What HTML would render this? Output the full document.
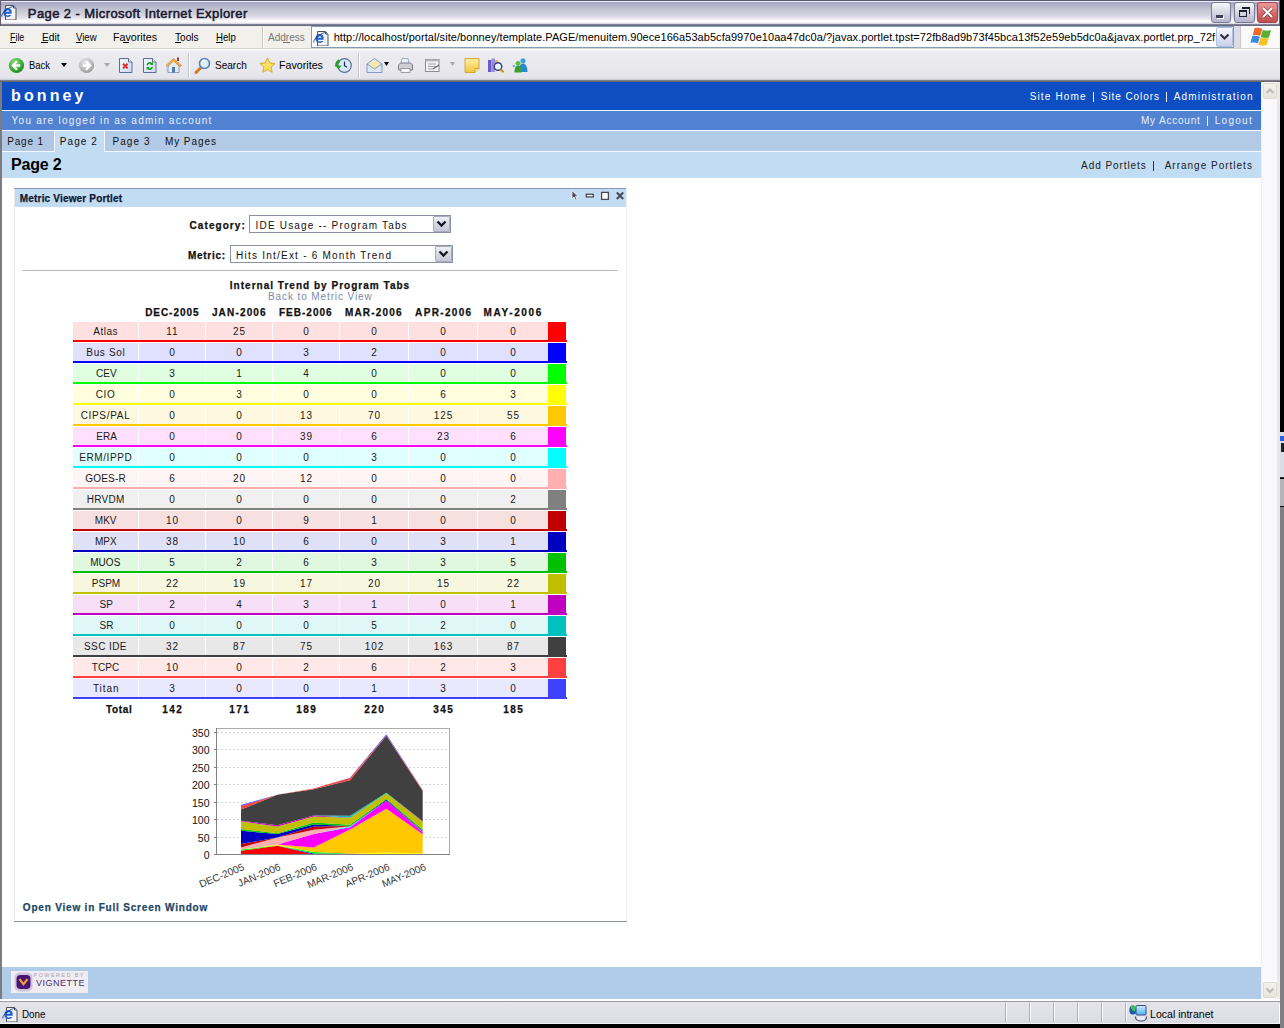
<!DOCTYPE html>
<html><head><meta charset="utf-8"><style>
html,body{margin:0;padding:0;width:1284px;height:1028px;overflow:hidden;background:#000;}
#w{position:absolute;left:0;top:0;width:1284px;height:1028px;overflow:hidden;background:#000;}
#w div{position:absolute;}
.t{white-space:pre;}
</style></head><body><div id="w">
<div style='left:0px;top:0px;width:1280px;height:26px;background:linear-gradient(#585870 0px,#585870 1px,#f0eef8 1px,#f0eef8 2px,#a6a4c0 2px,#b2b0c8 5px,#c4c6d4 10px,#d2d4e0 15px,#e6e2ee 18px,#f4f4f4 20px,#ffffff 21px,#ffffff 22px,#e4e0ea 23px,#d8d4e0 24px,#8a8aa0 24px,#606078 26px)'></div><div style='left:0px;top:0px;width:1px;height:26px;background:#606070'></div><svg style='position:absolute;left:0px;top:2px' width='18' height='18' viewBox='0 0 18 18'><path d='M5.5 3.5h8l2.5 2.5v12h-10.5z' fill='#f2f2ee' stroke='#505058' stroke-width='1'/><path d='M13.5 3.5v2.5h2.5' fill='#fff' stroke='#505058' stroke-width='1'/><path d='M11.5 8.5c-0.5-1.6-2-2.5-3.8-2.5c-2.5 0-4.4 2-4.4 4.6s1.9 4.4 4.4 4.4c1.6 0 2.9-.7 3.6-1.9h-2.3c-.4.4-.8.5-1.3.5c-1 0-1.8-.7-1.9-1.8h5.8c.1-1.3 0-2.4-.1-3.3zM5.9 9.8c.2-1 .9-1.6 1.9-1.6s1.6.6 1.7 1.6z' fill='#1f5fd0'/><path d='M2 14.5c-1-1.5 1.5-5 5.5-7.5s7-3 7.5-2' fill='none' stroke='#1a3a90' stroke-width='1' opacity='.85'/></svg><div style='left:1211px;top:2px;width:20px;height:21px;border:1px solid #7a7a92;border-radius:3px;box-sizing:border-box;background:linear-gradient(#f8f8fc,#d4d4e2 55%,#b4b4cc)'></div><div style='left:1216px;top:15px;width:7px;height:3px;background:#404058;box-shadow:1px 1px 0 #fff'></div><div style='left:1234px;top:2px;width:21px;height:21px;border:1px solid #7a7a92;border-radius:3px;box-sizing:border-box;background:linear-gradient(#f8f8fc,#d4d4e2 55%,#b4b4cc)'></div><div style='left:1239px;top:10px;width:8px;height:7px;border:1px solid #202030;border-top-width:2px;box-sizing:border-box'></div><div style='left:1242px;top:7px;width:8px;height:7px;border:1px solid #202030;border-top-width:2px;border-left:none;border-bottom:none;box-sizing:border-box'></div><div style='left:1257px;top:2px;width:21px;height:21px;border:1px solid #a04050;border-radius:3px;box-sizing:border-box;background:linear-gradient(#ec9a9a,#d46868 55%,#c05050)'></div><svg style='position:absolute;left:1257px;top:2px' width='21' height='21'><path d='M6 6L15 15M15 6L6 15' stroke='#602030' stroke-width='3.4' opacity='.55'/><path d='M6 6L15 15M15 6L6 15' stroke='#ffffff' stroke-width='2'/></svg><div style='left:1277px;top:82px;width:3px;height:918px;background:#ebe9e8'></div><div style='left:1279px;top:0px;width:1px;height:26px;background:#606070'></div><div style='left:1280px;top:432px;width:4px;height:45px;background:#dcdce6'></div><div style='left:1280px;top:436px;width:4px;height:5px;background:#3060e0'></div><div style='left:1281px;top:443px;width:3px;height:9px;background:#202020'></div><div style='left:1280px;top:477px;width:4px;height:1px;background:#303030'></div><div style='left:1280px;top:479px;width:4px;height:27px;background:#b4b4b8'></div><div style='left:1280px;top:506px;width:4px;height:1px;background:#101010'></div><div style='left:1280px;top:507px;width:4px;height:521px;background:#808084'></div><div style='left:0px;top:26px;width:1280px;height:23px;background:#f1f0ea'></div><div style='left:0px;top:48px;width:1280px;height:1px;background:#d8d4cc'></div><div style='left:10px;top:42px;width:6px;height:1px;background:#000'></div><div style='left:41px;top:42px;width:7px;height:1px;background:#000'></div><div style='left:76px;top:42px;width:6px;height:1px;background:#000'></div><div style='left:123px;top:42px;width:6px;height:1px;background:#000'></div><div style='left:175px;top:42px;width:6px;height:1px;background:#000'></div><div style='left:216px;top:42px;width:7px;height:1px;background:#000'></div><div style='left:262px;top:27px;width:1px;height:21px;background:#c8c4bc'></div><div style='left:263px;top:27px;width:1px;height:21px;background:#ffffff'></div><div style='left:283px;top:42px;width:7px;height:1px;background:#767676'></div><div style='left:311px;top:26px;width:923px;height:22px;background:#fff;border:1px solid #7f9db9;box-sizing:border-box'></div><svg style='position:absolute;left:312px;top:28px' width='18' height='18' viewBox='0 0 18 18'><path d='M5.5 3.5h8l2.5 2.5v12h-10.5z' fill='#f2f2ee' stroke='#505058' stroke-width='1'/><path d='M13.5 3.5v2.5h2.5' fill='#fff' stroke='#505058' stroke-width='1'/><path d='M11.5 8.5c-0.5-1.6-2-2.5-3.8-2.5c-2.5 0-4.4 2-4.4 4.6s1.9 4.4 4.4 4.4c1.6 0 2.9-.7 3.6-1.9h-2.3c-.4.4-.8.5-1.3.5c-1 0-1.8-.7-1.9-1.8h5.8c.1-1.3 0-2.4-.1-3.3zM5.9 9.8c.2-1 .9-1.6 1.9-1.6s1.6.6 1.7 1.6z' fill='#1f5fd0'/><path d='M2 14.5c-1-1.5 1.5-5 5.5-7.5s7-3 7.5-2' fill='none' stroke='#1a3a90' stroke-width='1' opacity='.85'/></svg><div style='left:1216px;top:27px;width:17px;height:20px;border:1px solid #b0c0e0;border-radius:2px;box-sizing:border-box;background:linear-gradient(#f8f8ff,#c8d0e8)'></div><svg style='position:absolute;left:1216px;top:27px' width='17' height='20'><path d='M4.5 7.5L8.5 11.5L12.5 7.5' fill='none' stroke='#303040' stroke-width='2.2'/></svg><div style='left:1234px;top:26px;width:6px;height:22px;background:#dcdce6'></div><div style='left:1240px;top:26px;width:1px;height:22px;background:#c8c8d0'></div><div style='left:1241px;top:26px;width:38px;height:22px;background:#fafafa'></div><svg style='position:absolute;left:1244px;top:24px' width='36' height='24' viewBox='0 0 36 24'><path d='M10.5 4.2c2.5-.6 5-.4 7.8.6l-2 7c-2.6-1-5-1.1-7.6-.5z' fill='#f26a2a'/><path d='M18.8 6c2.8 1 5.6 1 8.2.3l-2 7.2c-2.6.7-5.4.6-8.2-.4z' fill='#5cb030'/><path d='M8.2 12.2c2.6-.6 5-.5 7.6.5l-1.8 6.6c-2.6-1-5-1.1-7.6-.5z' fill='#3a8ae0'/><path d='M16.5 13.5c2.8 1 5.4 1.1 8.2.4l-2 7.2c-2.6.7-5.4.6-8.2-.4z' fill='#f8c020'/></svg><div style='left:0px;top:49px;width:1280px;height:31px;background:linear-gradient(#fbfbfc 0px,#fbfbfc 1px,#ececf0 2px,#e8e8ed 20px,#e4e4ea 29px,#c8c8d0 31px)'></div><div style='left:0px;top:80px;width:1280px;height:2px;background:linear-gradient(#8a8a94,#5c5c66)'></div><svg style='position:absolute;left:8px;top:57px' width='17' height='17' viewBox='0 0 17 17'><defs><radialGradient id='gb' cx='.4' cy='.3' r='.8'><stop offset='0' stop-color='#8ee07a'/><stop offset='.6' stop-color='#3aaa32'/><stop offset='1' stop-color='#1e7a1e'/></radialGradient><radialGradient id='gf' cx='.4' cy='.3' r='.8'><stop offset='0' stop-color='#e8e8e8'/><stop offset='.6' stop-color='#b8b8b8'/><stop offset='1' stop-color='#909090'/></radialGradient></defs><circle cx='8.5' cy='8.5' r='7.6' fill='url(#gb)'/><path d='M9 4.2L4.8 8.5L9 12.8M5.2 8.5h7' fill='none' stroke='#fff' stroke-width='2.3'/></svg><svg style='position:absolute;left:60px;top:62px' width='8' height='6'><path d='M1 1h6L4 5z' fill='#000'/></svg><svg style='position:absolute;left:78px;top:57px' width='17' height='17' viewBox='0 0 17 17'><circle cx='8.5' cy='8.5' r='7.6' fill='url(#gf)'/><path d='M8 4.2L12.2 8.5L8 12.8M11.8 8.5h-7' fill='none' stroke='#fff' stroke-width='2.3'/></svg><svg style='position:absolute;left:103px;top:62px' width='8' height='6'><path d='M1 1h6L4 5z' fill='#a8a8a8'/></svg><svg style='position:absolute;left:118px;top:57px' width='16' height='17' viewBox='0 0 16 17'><defs><linearGradient id='gd' x1='0' y1='0' x2='1' y2='1'><stop offset='0' stop-color='#f4f8ff'/><stop offset='1' stop-color='#c8d8f4'/></linearGradient></defs><path d='M1.5 1.5h9l3.5 3.5v10.5h-12.5z' fill='url(#gd)' stroke='#5a6e98'/><path d='M10.5 1.5v3.5h3.5' fill='#fff' stroke='#5a6e98'/><path d='M5 6.8l4.6 4.6M9.6 6.8l-4.6 4.6' stroke='#e03020' stroke-width='2'/></svg><svg style='position:absolute;left:142px;top:57px' width='16' height='17' viewBox='0 0 16 17'><path d='M1.5 1.5h9l3.5 3.5v10.5h-12.5z' fill='url(#gd)' stroke='#5a6e98'/><path d='M10.5 1.5v3.5h3.5' fill='#fff' stroke='#5a6e98'/><path d='M4.6 8.2a3.2 3.2 0 0 1 5.4-2.2l1-1v3h-3l1-1a2 2 0 0 0-3 1.2zM11 9.8a3.2 3.2 0 0 1-5.4 2.2l-1 1v-3h3l-1 1a2 2 0 0 0 3-1.2z' fill='#18a018'/></svg><svg style='position:absolute;left:165px;top:56px' width='18' height='18' viewBox='0 0 18 18'><path d='M3 9.5v7h11v-7l-5.5-5z' fill='#e4ecf8' stroke='#7a8aa8' stroke-width='.8'/><path d='M1 9.5L8.5 2.5L16.5 9.5L15 10.8L8.5 5L2.5 10.8z' fill='#f8b040' stroke='#c87820' stroke-width='.6'/><rect x='12' y='1.5' width='2' height='3.5' fill='#a04020'/><rect x='7' y='11' width='3' height='5.5' fill='#5a78a8'/><path d='M3 9.5v7l-1.5-1.5v-5z' fill='#a8c0e0'/></svg><div style='left:188px;top:53px;width:1px;height:25px;background:#c4c4cc'></div><div style='left:189px;top:53px;width:1px;height:25px;background:#fff'></div><svg style='position:absolute;left:194px;top:57px' width='17' height='17' viewBox='0 0 17 17'><path d='M2 15.5L6.5 11' stroke='#c88030' stroke-width='3' stroke-linecap='round'/><circle cx='10.5' cy='6.5' r='5' fill='#dcefff' stroke='#5a80b8' stroke-width='1.6'/><path d='M8 5a3 3 0 0 1 3-2' stroke='#fff' stroke-width='1.2' fill='none'/></svg><svg style='position:absolute;left:259px;top:57px' width='17' height='17' viewBox='0 0 17 17'><path d='M8.5 1l2.3 4.9 5.2.6-3.9 3.6 1.1 5.2-4.7-2.7-4.7 2.7 1.1-5.2L1 6.5l5.2-.6z' fill='#fce060' stroke='#d0a020' stroke-width='.9'/></svg><svg style='position:absolute;left:335px;top:57px' width='17' height='17' viewBox='0 0 17 17'><circle cx='9.5' cy='8.5' r='6.8' fill='#d8e8f8' stroke='#5a6e98' stroke-width='1.2'/><path d='M9.5 4.5v4.2l2.6 1.6' stroke='#203050' stroke-width='1.2' fill='none'/><path d='M1.5 9.5a6 6 0 0 1 3-6' stroke='#28a028' stroke-width='2.6' fill='none'/><path d='M0.5 8.5l3 4 3-4z' fill='#28a028'/></svg><div style='left:358px;top:53px;width:1px;height:25px;background:#c4c4cc'></div><div style='left:359px;top:53px;width:1px;height:25px;background:#fff'></div><svg style='position:absolute;left:366px;top:57px' width='17' height='17' viewBox='0 0 17 17'><path d='M1 7l7.5-5.5 7.5 5.5v8.5H1z' fill='#dce8f8' stroke='#7890c0' stroke-width='.9'/><path d='M3 6.5l5.5-3.5 5.5 3.5v3l-5.5 3-5.5-3z' fill='#f8e8b0'/><path d='M1 7l7.5 5 7.5-5' fill='none' stroke='#7890c0' stroke-width='.9'/></svg><svg style='position:absolute;left:384px;top:62px' width='6' height='5'><path d='M0 0h5L2.5 4z' fill='#000'/></svg><svg style='position:absolute;left:397px;top:57px' width='17' height='17' viewBox='0 0 17 17'><path d='M5 1.5h6l1 5h-8z' fill='#e8f0ff' stroke='#8898b8' stroke-width='.8'/><path d='M1.5 8l2-2h10l2 2v5h-14z' fill='#d0d0d4' stroke='#70707a' stroke-width='.9'/><rect x='4' y='11.5' width='9' height='4' fill='#f8f8f8' stroke='#8a8a90' stroke-width='.8'/></svg><svg style='position:absolute;left:424px;top:57px' width='17' height='17' viewBox='0 0 17 17'><rect x='1.5' y='2.5' width='13.5' height='12' fill='#f4f4f4' stroke='#8c8c8c'/><rect x='1.5' y='2.5' width='13.5' height='2' fill='#b8b8b8'/><path d='M4 7h8M4 9.5h8M4 12h5' stroke='#a0a0a0'/><path d='M9 12l6-4' stroke='#707070' stroke-width='1.5'/></svg><svg style='position:absolute;left:450px;top:62px' width='6' height='5'><path d='M0 0h5L2.5 4z' fill='#a8a8a8'/></svg><svg style='position:absolute;left:464px;top:57px' width='16' height='17' viewBox='0 0 16 17'><defs><linearGradient id='gs' x1='0' y1='0' x2='0' y2='1'><stop offset='0' stop-color='#fff0a0'/><stop offset='1' stop-color='#f0c840'/></linearGradient></defs><path d='M1 1.5h14v10l-4 4H1z' fill='url(#gs)' stroke='#d0a030' stroke-width='.9'/><path d='M15 11.5h-4v4' fill='#f8e8a0' stroke='#d0a030' stroke-width='.9'/></svg><svg style='position:absolute;left:487px;top:57px' width='17' height='17' viewBox='0 0 17 17'><rect x='1' y='3' width='3.5' height='12' fill='#6a5ac8'/><rect x='4.5' y='1.5' width='3.5' height='13.5' fill='#9890d8'/><rect x='8' y='3' width='3' height='5' fill='#e0c040'/><circle cx='11' cy='9.5' r='3.8' fill='#e4f2ff' stroke='#3a3a80' stroke-width='1.4'/><path d='M13.5 12.2l3 3' stroke='#c89020' stroke-width='2'/></svg><svg style='position:absolute;left:512px;top:57px' width='17' height='17' viewBox='0 0 17 17'><circle cx='11' cy='3.8' r='2.6' fill='#38a0e8'/><path d='M6.5 15c0-5.5 2-8.5 4.5-8.5s4.5 3 4.5 8.5z' fill='#2a88d0'/><circle cx='6' cy='6.3' r='2.4' fill='#58c040'/><path d='M2.5 15.5c0-5 1.2-7 3.5-7s3.5 2 3.5 7z' fill='#38a030'/><circle cx='1.8' cy='9' r='1.1' fill='#38a0e8'/></svg><div style='left:0px;top:82px;width:2px;height:917px;background:#7c7c80'></div><div style='left:2px;top:82px;width:1259px;height:916px;background:#ffffff'></div><div style='left:2px;top:82px;width:1259px;height:28px;background:#0e4ec2'></div><div style='left:2px;top:110px;width:1259px;height:1px;background:#f4f8ff'></div><div style='left:2px;top:111px;width:1259px;height:19px;background:#5282d2'></div><div style='left:2px;top:130px;width:1259px;height:1px;background:#f4f8ff'></div><div style='left:2px;top:131px;width:1259px;height:20px;background:#b2cae6'></div><div style='left:2px;top:151px;width:1259px;height:1px;background:#f4f8ff'></div><div style='left:2px;top:152px;width:1259px;height:26px;background:#c2dcf4'></div><div style='left:2px;top:131px;width:53px;height:21px;background:#b0c8e4;border-right:1px solid #f4f8ff;border-bottom:1px solid #f4f8ff;box-sizing:border-box'></div><div style='left:54px;top:131px;width:51px;height:21px;background:#c2dcf4;border-left:1px solid #f4f8ff;border-right:1px solid #f4f8ff;box-sizing:border-box'></div><div style='left:1093px;top:92px;width:1px;height:10px;background:#f0f4ff'></div><div style='left:1166px;top:92px;width:1px;height:10px;background:#f0f4ff'></div><div style='left:1207px;top:116px;width:1px;height:10px;background:#e8eefa'></div><div style='left:1153px;top:161px;width:1px;height:10px;background:#303040'></div><div style='left:1261px;top:82px;width:16px;height:917px;background:#f9f9fc;border-left:1px solid #eeeef4;box-sizing:border-box'></div><div style='left:1263px;top:83px;width:14px;height:16px;background:linear-gradient(#f4f2ec,#e6e4dc);border:1px solid #dcdad2;border-radius:2px;box-sizing:border-box'></div><svg style='position:absolute;left:1263px;top:83px' width='14' height='16'><path d='M3.5 10L7 6.5L10.5 10' fill='none' stroke='#bcbab4' stroke-width='2'/></svg><div style='left:1263px;top:982px;width:14px;height:16px;background:linear-gradient(#f4f2ec,#e6e4dc);border:1px solid #dcdad2;border-radius:2px;box-sizing:border-box'></div><svg style='position:absolute;left:1263px;top:982px' width='14' height='16'><path d='M3.5 6.5L7 10L10.5 6.5' fill='none' stroke='#bcbab4' stroke-width='2'/></svg><div style='left:14px;top:188px;width:612px;height:1px;background:#8898b0'></div><div style='left:14px;top:189px;width:612px;height:18px;background:#c2dcf4'></div><div style='left:14px;top:189px;width:1px;height:732px;background:#ececf0'></div><div style='left:626px;top:188px;width:1px;height:733px;background:#f0f0f4'></div><div style='left:14px;top:921px;width:613px;height:1px;background:#8e96a4'></div><svg style='position:absolute;left:566px;top:186px' width='64' height='18' viewBox='0 0 64 18'><path d='M6 4.7v8.2l2-1.9 1.7 3.2 1.3-.7-1.6-3.1h2.8z' fill='#4a4a56' stroke='#fff' stroke-width='.7'/><rect x='20.3' y='8.3' width='7' height='2.6' fill='#fff' stroke='#4a4a56' stroke-width='1.3'/><rect x='35.6' y='6.4' width='6.8' height='7' fill='#fff' stroke='#4a4a56' stroke-width='1.3'/><path d='M50.8 6.5L57.2 12.9M57.2 6.5L50.8 12.9' stroke='#4a4a56' stroke-width='2.1'/></svg><div style='left:249px;top:215px;width:202px;height:18px;border:1px solid #8a94a4;background:#fff;box-sizing:border-box'></div><div style='left:433px;top:216px;width:17px;height:16px;border:1px solid #a8acbc;border-radius:1px;background:linear-gradient(#f0f0f6,#d8d8e4 50%,#c6c6d6);box-sizing:border-box'></div><svg style='position:absolute;left:433px;top:216px' width='17' height='16'><path d='M4.5 5.5L8.5 9.5L12.5 5.5' fill='none' stroke='#181820' stroke-width='2.3'/></svg><div style='left:230px;top:245px;width:223px;height:18px;border:1px solid #8a94a4;background:#fff;box-sizing:border-box'></div><div style='left:435px;top:246px;width:17px;height:16px;border:1px solid #a8acbc;border-radius:1px;background:linear-gradient(#f0f0f6,#d8d8e4 50%,#c6c6d6);box-sizing:border-box'></div><svg style='position:absolute;left:435px;top:246px' width='17' height='16'><path d='M4.5 5.5L8.5 9.5L12.5 5.5' fill='none' stroke='#181820' stroke-width='2.3'/></svg><div style='left:22px;top:270px;width:596px;height:1px;background:#b8b8c0'></div><div style='left:73px;top:322px;width:475px;height:18px;background:#ffe0e0'></div><div style='left:73px;top:340px;width:476px;height:2px;background:#ff0000'></div><div style='left:138px;top:322px;width:1px;height:18px;background:#ffffff'></div><div style='left:205px;top:322px;width:1px;height:18px;background:#ffffff'></div><div style='left:272px;top:322px;width:1px;height:18px;background:#ffffff'></div><div style='left:339px;top:322px;width:1px;height:18px;background:#ffffff'></div><div style='left:408px;top:322px;width:1px;height:18px;background:#ffffff'></div><div style='left:477px;top:322px;width:1px;height:18px;background:#ffffff'></div><div style='left:548px;top:322px;width:18px;height:20px;background:#ff0000'></div><div style='left:566px;top:340px;width:1px;height:2px;background:#ff0000'></div><div style='left:73px;top:343px;width:475px;height:18px;background:#e0e0ff'></div><div style='left:73px;top:361px;width:476px;height:2px;background:#0000ff'></div><div style='left:138px;top:343px;width:1px;height:18px;background:#ffffff'></div><div style='left:205px;top:343px;width:1px;height:18px;background:#ffffff'></div><div style='left:272px;top:343px;width:1px;height:18px;background:#ffffff'></div><div style='left:339px;top:343px;width:1px;height:18px;background:#ffffff'></div><div style='left:408px;top:343px;width:1px;height:18px;background:#ffffff'></div><div style='left:477px;top:343px;width:1px;height:18px;background:#ffffff'></div><div style='left:548px;top:343px;width:18px;height:20px;background:#0000ff'></div><div style='left:566px;top:361px;width:1px;height:2px;background:#0000ff'></div><div style='left:73px;top:364px;width:475px;height:18px;background:#e0ffe0'></div><div style='left:73px;top:382px;width:476px;height:2px;background:#00ff00'></div><div style='left:138px;top:364px;width:1px;height:18px;background:#ffffff'></div><div style='left:205px;top:364px;width:1px;height:18px;background:#ffffff'></div><div style='left:272px;top:364px;width:1px;height:18px;background:#ffffff'></div><div style='left:339px;top:364px;width:1px;height:18px;background:#ffffff'></div><div style='left:408px;top:364px;width:1px;height:18px;background:#ffffff'></div><div style='left:477px;top:364px;width:1px;height:18px;background:#ffffff'></div><div style='left:548px;top:364px;width:18px;height:20px;background:#00ff00'></div><div style='left:566px;top:382px;width:1px;height:2px;background:#00ff00'></div><div style='left:73px;top:385px;width:475px;height:18px;background:#ffffe0'></div><div style='left:73px;top:403px;width:476px;height:2px;background:#ffff00'></div><div style='left:138px;top:385px;width:1px;height:18px;background:#ffffff'></div><div style='left:205px;top:385px;width:1px;height:18px;background:#ffffff'></div><div style='left:272px;top:385px;width:1px;height:18px;background:#ffffff'></div><div style='left:339px;top:385px;width:1px;height:18px;background:#ffffff'></div><div style='left:408px;top:385px;width:1px;height:18px;background:#ffffff'></div><div style='left:477px;top:385px;width:1px;height:18px;background:#ffffff'></div><div style='left:548px;top:385px;width:18px;height:20px;background:#ffff00'></div><div style='left:566px;top:403px;width:1px;height:2px;background:#ffff00'></div><div style='left:73px;top:406px;width:475px;height:18px;background:#fff8e0'></div><div style='left:73px;top:424px;width:476px;height:2px;background:#ffc800'></div><div style='left:138px;top:406px;width:1px;height:18px;background:#ffffff'></div><div style='left:205px;top:406px;width:1px;height:18px;background:#ffffff'></div><div style='left:272px;top:406px;width:1px;height:18px;background:#ffffff'></div><div style='left:339px;top:406px;width:1px;height:18px;background:#ffffff'></div><div style='left:408px;top:406px;width:1px;height:18px;background:#ffffff'></div><div style='left:477px;top:406px;width:1px;height:18px;background:#ffffff'></div><div style='left:548px;top:406px;width:18px;height:20px;background:#ffc800'></div><div style='left:566px;top:424px;width:1px;height:2px;background:#ffc800'></div><div style='left:73px;top:427px;width:475px;height:18px;background:#ffe0ff'></div><div style='left:73px;top:445px;width:476px;height:2px;background:#ff00ff'></div><div style='left:138px;top:427px;width:1px;height:18px;background:#ffffff'></div><div style='left:205px;top:427px;width:1px;height:18px;background:#ffffff'></div><div style='left:272px;top:427px;width:1px;height:18px;background:#ffffff'></div><div style='left:339px;top:427px;width:1px;height:18px;background:#ffffff'></div><div style='left:408px;top:427px;width:1px;height:18px;background:#ffffff'></div><div style='left:477px;top:427px;width:1px;height:18px;background:#ffffff'></div><div style='left:548px;top:427px;width:18px;height:20px;background:#ff00ff'></div><div style='left:566px;top:445px;width:1px;height:2px;background:#ff00ff'></div><div style='left:73px;top:448px;width:475px;height:18px;background:#e0ffff'></div><div style='left:73px;top:466px;width:476px;height:2px;background:#00ffff'></div><div style='left:138px;top:448px;width:1px;height:18px;background:#ffffff'></div><div style='left:205px;top:448px;width:1px;height:18px;background:#ffffff'></div><div style='left:272px;top:448px;width:1px;height:18px;background:#ffffff'></div><div style='left:339px;top:448px;width:1px;height:18px;background:#ffffff'></div><div style='left:408px;top:448px;width:1px;height:18px;background:#ffffff'></div><div style='left:477px;top:448px;width:1px;height:18px;background:#ffffff'></div><div style='left:548px;top:448px;width:18px;height:20px;background:#00ffff'></div><div style='left:566px;top:466px;width:1px;height:2px;background:#00ffff'></div><div style='left:73px;top:469px;width:475px;height:18px;background:#fff5f5'></div><div style='left:73px;top:487px;width:476px;height:2px;background:#ffafaf'></div><div style='left:138px;top:469px;width:1px;height:18px;background:#ffffff'></div><div style='left:205px;top:469px;width:1px;height:18px;background:#ffffff'></div><div style='left:272px;top:469px;width:1px;height:18px;background:#ffffff'></div><div style='left:339px;top:469px;width:1px;height:18px;background:#ffffff'></div><div style='left:408px;top:469px;width:1px;height:18px;background:#ffffff'></div><div style='left:477px;top:469px;width:1px;height:18px;background:#ffffff'></div><div style='left:548px;top:469px;width:18px;height:20px;background:#ffafaf'></div><div style='left:566px;top:487px;width:1px;height:2px;background:#ffafaf'></div><div style='left:73px;top:490px;width:475px;height:18px;background:#f0f0f0'></div><div style='left:73px;top:508px;width:476px;height:2px;background:#808080'></div><div style='left:138px;top:490px;width:1px;height:18px;background:#ffffff'></div><div style='left:205px;top:490px;width:1px;height:18px;background:#ffffff'></div><div style='left:272px;top:490px;width:1px;height:18px;background:#ffffff'></div><div style='left:339px;top:490px;width:1px;height:18px;background:#ffffff'></div><div style='left:408px;top:490px;width:1px;height:18px;background:#ffffff'></div><div style='left:477px;top:490px;width:1px;height:18px;background:#ffffff'></div><div style='left:548px;top:490px;width:18px;height:20px;background:#808080'></div><div style='left:566px;top:508px;width:1px;height:2px;background:#808080'></div><div style='left:73px;top:511px;width:475px;height:18px;background:#f7e0e0'></div><div style='left:73px;top:529px;width:476px;height:2px;background:#c00000'></div><div style='left:138px;top:511px;width:1px;height:18px;background:#ffffff'></div><div style='left:205px;top:511px;width:1px;height:18px;background:#ffffff'></div><div style='left:272px;top:511px;width:1px;height:18px;background:#ffffff'></div><div style='left:339px;top:511px;width:1px;height:18px;background:#ffffff'></div><div style='left:408px;top:511px;width:1px;height:18px;background:#ffffff'></div><div style='left:477px;top:511px;width:1px;height:18px;background:#ffffff'></div><div style='left:548px;top:511px;width:18px;height:20px;background:#c00000'></div><div style='left:566px;top:529px;width:1px;height:2px;background:#c00000'></div><div style='left:73px;top:532px;width:475px;height:18px;background:#e0e0f7'></div><div style='left:73px;top:550px;width:476px;height:2px;background:#0000c0'></div><div style='left:138px;top:532px;width:1px;height:18px;background:#ffffff'></div><div style='left:205px;top:532px;width:1px;height:18px;background:#ffffff'></div><div style='left:272px;top:532px;width:1px;height:18px;background:#ffffff'></div><div style='left:339px;top:532px;width:1px;height:18px;background:#ffffff'></div><div style='left:408px;top:532px;width:1px;height:18px;background:#ffffff'></div><div style='left:477px;top:532px;width:1px;height:18px;background:#ffffff'></div><div style='left:548px;top:532px;width:18px;height:20px;background:#0000c0'></div><div style='left:566px;top:550px;width:1px;height:2px;background:#0000c0'></div><div style='left:73px;top:553px;width:475px;height:18px;background:#e0f7e0'></div><div style='left:73px;top:571px;width:476px;height:2px;background:#00c000'></div><div style='left:138px;top:553px;width:1px;height:18px;background:#ffffff'></div><div style='left:205px;top:553px;width:1px;height:18px;background:#ffffff'></div><div style='left:272px;top:553px;width:1px;height:18px;background:#ffffff'></div><div style='left:339px;top:553px;width:1px;height:18px;background:#ffffff'></div><div style='left:408px;top:553px;width:1px;height:18px;background:#ffffff'></div><div style='left:477px;top:553px;width:1px;height:18px;background:#ffffff'></div><div style='left:548px;top:553px;width:18px;height:20px;background:#00c000'></div><div style='left:566px;top:571px;width:1px;height:2px;background:#00c000'></div><div style='left:73px;top:574px;width:475px;height:18px;background:#f7f7e0'></div><div style='left:73px;top:592px;width:476px;height:2px;background:#c0c000'></div><div style='left:138px;top:574px;width:1px;height:18px;background:#ffffff'></div><div style='left:205px;top:574px;width:1px;height:18px;background:#ffffff'></div><div style='left:272px;top:574px;width:1px;height:18px;background:#ffffff'></div><div style='left:339px;top:574px;width:1px;height:18px;background:#ffffff'></div><div style='left:408px;top:574px;width:1px;height:18px;background:#ffffff'></div><div style='left:477px;top:574px;width:1px;height:18px;background:#ffffff'></div><div style='left:548px;top:574px;width:18px;height:20px;background:#c0c000'></div><div style='left:566px;top:592px;width:1px;height:2px;background:#c0c000'></div><div style='left:73px;top:595px;width:475px;height:18px;background:#f7e0f7'></div><div style='left:73px;top:613px;width:476px;height:2px;background:#c000c0'></div><div style='left:138px;top:595px;width:1px;height:18px;background:#ffffff'></div><div style='left:205px;top:595px;width:1px;height:18px;background:#ffffff'></div><div style='left:272px;top:595px;width:1px;height:18px;background:#ffffff'></div><div style='left:339px;top:595px;width:1px;height:18px;background:#ffffff'></div><div style='left:408px;top:595px;width:1px;height:18px;background:#ffffff'></div><div style='left:477px;top:595px;width:1px;height:18px;background:#ffffff'></div><div style='left:548px;top:595px;width:18px;height:20px;background:#c000c0'></div><div style='left:566px;top:613px;width:1px;height:2px;background:#c000c0'></div><div style='left:73px;top:616px;width:475px;height:18px;background:#e0f7f7'></div><div style='left:73px;top:634px;width:476px;height:2px;background:#00c0c0'></div><div style='left:138px;top:616px;width:1px;height:18px;background:#ffffff'></div><div style='left:205px;top:616px;width:1px;height:18px;background:#ffffff'></div><div style='left:272px;top:616px;width:1px;height:18px;background:#ffffff'></div><div style='left:339px;top:616px;width:1px;height:18px;background:#ffffff'></div><div style='left:408px;top:616px;width:1px;height:18px;background:#ffffff'></div><div style='left:477px;top:616px;width:1px;height:18px;background:#ffffff'></div><div style='left:548px;top:616px;width:18px;height:20px;background:#00c0c0'></div><div style='left:566px;top:634px;width:1px;height:2px;background:#00c0c0'></div><div style='left:73px;top:637px;width:475px;height:18px;background:#e8e8e8'></div><div style='left:73px;top:655px;width:476px;height:2px;background:#404040'></div><div style='left:138px;top:637px;width:1px;height:18px;background:#ffffff'></div><div style='left:205px;top:637px;width:1px;height:18px;background:#ffffff'></div><div style='left:272px;top:637px;width:1px;height:18px;background:#ffffff'></div><div style='left:339px;top:637px;width:1px;height:18px;background:#ffffff'></div><div style='left:408px;top:637px;width:1px;height:18px;background:#ffffff'></div><div style='left:477px;top:637px;width:1px;height:18px;background:#ffffff'></div><div style='left:548px;top:637px;width:18px;height:20px;background:#404040'></div><div style='left:566px;top:655px;width:1px;height:2px;background:#404040'></div><div style='left:73px;top:658px;width:475px;height:18px;background:#ffe8e8'></div><div style='left:73px;top:676px;width:476px;height:2px;background:#ff4040'></div><div style='left:138px;top:658px;width:1px;height:18px;background:#ffffff'></div><div style='left:205px;top:658px;width:1px;height:18px;background:#ffffff'></div><div style='left:272px;top:658px;width:1px;height:18px;background:#ffffff'></div><div style='left:339px;top:658px;width:1px;height:18px;background:#ffffff'></div><div style='left:408px;top:658px;width:1px;height:18px;background:#ffffff'></div><div style='left:477px;top:658px;width:1px;height:18px;background:#ffffff'></div><div style='left:548px;top:658px;width:18px;height:20px;background:#ff4040'></div><div style='left:566px;top:676px;width:1px;height:2px;background:#ff4040'></div><div style='left:73px;top:679px;width:475px;height:18px;background:#e8e8ff'></div><div style='left:73px;top:697px;width:476px;height:2px;background:#4040ff'></div><div style='left:138px;top:679px;width:1px;height:18px;background:#ffffff'></div><div style='left:205px;top:679px;width:1px;height:18px;background:#ffffff'></div><div style='left:272px;top:679px;width:1px;height:18px;background:#ffffff'></div><div style='left:339px;top:679px;width:1px;height:18px;background:#ffffff'></div><div style='left:408px;top:679px;width:1px;height:18px;background:#ffffff'></div><div style='left:477px;top:679px;width:1px;height:18px;background:#ffffff'></div><div style='left:548px;top:679px;width:18px;height:20px;background:#4040ff'></div><div style='left:566px;top:697px;width:1px;height:2px;background:#4040ff'></div><div style='left:2px;top:967px;width:1259px;height:32px;background:#b0cce8'></div><div style='left:11px;top:971px;width:77px;height:22px;background:#efedf2'></div><svg style='position:absolute;left:14px;top:972px' width='19' height='20' viewBox='0 0 19 20'><rect x='0.5' y='0.5' width='18' height='19' rx='5' fill='#b8a0c8' opacity='.55'/><rect x='2.5' y='3' width='14' height='14' rx='4' fill='#4a1474'/><path d='M4.5 7.5L9.5 14L14.5 7.5L12.5 6.5L9.5 10.5L6.5 6.5z' fill='#f0a030'/></svg><div style='left:0px;top:999px;width:1280px;height:2px;background:#ffffff'></div><div style='left:0px;top:1001px;width:1280px;height:1px;background:#9c9ca4'></div><div style='left:0px;top:1002px;width:1280px;height:21px;background:linear-gradient(#e4e4ea,#dcdce4)'></div><div style='left:0px;top:1023px;width:1280px;height:1px;background:#f4f4f8'></div><div style='left:1279px;top:1004px;width:1px;height:19px;background:#ffffff'></div><div style='left:1005px;top:1003px;width:1px;height:19px;background:#b0b0b8'></div><div style='left:1006px;top:1003px;width:1px;height:19px;background:#ffffff'></div><div style='left:1029px;top:1003px;width:1px;height:19px;background:#b0b0b8'></div><div style='left:1030px;top:1003px;width:1px;height:19px;background:#ffffff'></div><div style='left:1053px;top:1003px;width:1px;height:19px;background:#b0b0b8'></div><div style='left:1054px;top:1003px;width:1px;height:19px;background:#ffffff'></div><div style='left:1077px;top:1003px;width:1px;height:19px;background:#b0b0b8'></div><div style='left:1078px;top:1003px;width:1px;height:19px;background:#ffffff'></div><div style='left:1101px;top:1003px;width:1px;height:19px;background:#b0b0b8'></div><div style='left:1102px;top:1003px;width:1px;height:19px;background:#ffffff'></div><div style='left:1125px;top:1003px;width:1px;height:19px;background:#b0b0b8'></div><div style='left:1126px;top:1003px;width:1px;height:19px;background:#ffffff'></div><svg style='position:absolute;left:1px;top:1004px' width='18' height='18' viewBox='0 0 18 18'><path d='M5.5 3.5h8l2.5 2.5v12h-10.5z' fill='#f2f2ee' stroke='#505058' stroke-width='1'/><path d='M13.5 3.5v2.5h2.5' fill='#fff' stroke='#505058' stroke-width='1'/><path d='M11.5 8.5c-0.5-1.6-2-2.5-3.8-2.5c-2.5 0-4.4 2-4.4 4.6s1.9 4.4 4.4 4.4c1.6 0 2.9-.7 3.6-1.9h-2.3c-.4.4-.8.5-1.3.5c-1 0-1.8-.7-1.9-1.8h5.8c.1-1.3 0-2.4-.1-3.3zM5.9 9.8c.2-1 .9-1.6 1.9-1.6s1.6.6 1.7 1.6z' fill='#1f5fd0'/><path d='M2 14.5c-1-1.5 1.5-5 5.5-7.5s7-3 7.5-2' fill='none' stroke='#1a3a90' stroke-width='1' opacity='.85'/></svg><svg style='position:absolute;left:1126px;top:1002px' width='24' height='22' viewBox='0 0 24 22'><defs><linearGradient id='gm' x1='0' y1='0' x2='0' y2='1'><stop offset='0' stop-color='#c8f0ff'/><stop offset='1' stop-color='#50b0f0'/></linearGradient></defs><path d='M9.5 14.5c0 3 1 4.5 5.5 4.5s5.5-1.5 5.5-4.5' fill='#ecebf4' stroke='#4a4868' stroke-width='1.2'/><rect x='10' y='3.5' width='10' height='9.5' rx='1' fill='url(#gm)' stroke='#3a4a88' stroke-width='1'/><ellipse cx='6.8' cy='8' rx='3.4' ry='4.6' fill='#1858b0'/><path d='M4.5 4.5c1.5-1.5 4-1.5 5.5 0.5l-1 4.5c-2 0-4-2-4.5-5z' fill='#40c050'/></svg><svg style='position:absolute;left:0;top:0' width='1284' height='1028' viewBox='0 0 1284 1028'><line x1='217' y1='837.5' x2='449' y2='837.5' stroke='#d4d4d4' stroke-width='1' stroke-dasharray='2,2'/><line x1='217' y1='819.5' x2='449' y2='819.5' stroke='#d4d4d4' stroke-width='1' stroke-dasharray='2,2'/><line x1='217' y1='802.5' x2='449' y2='802.5' stroke='#d4d4d4' stroke-width='1' stroke-dasharray='2,2'/><line x1='217' y1='784.5' x2='449' y2='784.5' stroke='#d4d4d4' stroke-width='1' stroke-dasharray='2,2'/><line x1='217' y1='767.5' x2='449' y2='767.5' stroke='#d4d4d4' stroke-width='1' stroke-dasharray='2,2'/><line x1='217' y1='749.5' x2='449' y2='749.5' stroke='#d4d4d4' stroke-width='1' stroke-dasharray='2,2'/><line x1='217' y1='732.5' x2='449' y2='732.5' stroke='#d4d4d4' stroke-width='1' stroke-dasharray='2,2'/><polygon points='241.00,850.66 277.34,845.78 313.68,854.50 350.02,854.50 386.36,854.50 422.70,854.50 422.70,854.50 386.36,854.50 350.02,854.50 313.68,854.50 277.34,854.50 241.00,854.50' fill='#ff0000'/><polygon points='241.00,850.66 277.34,845.78 313.68,853.45 350.02,853.80 386.36,854.50 422.70,854.50 422.70,854.50 386.36,854.50 350.02,854.50 313.68,854.50 277.34,845.78 241.00,850.66' fill='#0000ff'/><polygon points='241.00,849.62 277.34,845.43 313.68,852.06 350.02,853.80 386.36,854.50 422.70,854.50 422.70,854.50 386.36,854.50 350.02,853.80 313.68,853.45 277.34,845.78 241.00,850.66' fill='#00ff00'/><polygon points='241.00,849.62 277.34,844.38 313.68,852.06 350.02,853.80 386.36,852.41 422.70,853.45 422.70,854.50 386.36,854.50 350.02,853.80 313.68,852.06 277.34,845.43 241.00,849.62' fill='#ffff00'/><polygon points='241.00,849.62 277.34,844.38 313.68,847.52 350.02,829.38 386.36,808.79 422.70,834.26 422.70,853.45 386.36,852.41 350.02,853.80 313.68,852.06 277.34,844.38 241.00,849.62' fill='#ffc800'/><polygon points='241.00,849.62 277.34,844.38 313.68,833.91 350.02,827.29 386.36,800.77 422.70,832.17 422.70,834.26 386.36,808.79 350.02,829.38 313.68,847.52 277.34,844.38 241.00,849.62' fill='#ff00ff'/><polygon points='241.00,849.62 277.34,844.38 313.68,833.91 350.02,826.24 386.36,800.77 422.70,832.17 422.70,832.17 386.36,800.77 350.02,827.29 313.68,833.91 277.34,844.38 241.00,849.62' fill='#00ffff'/><polygon points='241.00,847.52 277.34,837.40 313.68,829.73 350.02,826.24 386.36,800.77 422.70,832.17 422.70,832.17 386.36,800.77 350.02,826.24 313.68,833.91 277.34,844.38 241.00,849.62' fill='#ffafaf'/><polygon points='241.00,847.52 277.34,837.40 313.68,829.73 350.02,826.24 386.36,800.77 422.70,831.47 422.70,832.17 386.36,800.77 350.02,826.24 313.68,829.73 277.34,837.40 241.00,847.52' fill='#808080'/><polygon points='241.00,844.03 277.34,837.40 313.68,826.59 350.02,825.89 386.36,800.77 422.70,831.47 422.70,831.47 386.36,800.77 350.02,826.24 313.68,829.73 277.34,837.40 241.00,847.52' fill='#c00000'/><polygon points='241.00,830.77 277.34,833.91 313.68,824.49 350.02,825.89 386.36,799.72 422.70,831.12 422.70,831.47 386.36,800.77 350.02,825.89 313.68,826.59 277.34,837.40 241.00,844.03' fill='#0000c0'/><polygon points='241.00,829.03 277.34,833.22 313.68,822.40 350.02,824.84 386.36,798.68 422.70,829.38 422.70,831.12 386.36,799.72 350.02,825.89 313.68,824.49 277.34,833.91 241.00,830.77' fill='#00c000'/><polygon points='241.00,821.35 277.34,826.59 313.68,816.47 350.02,817.87 386.36,793.44 422.70,821.70 422.70,829.38 386.36,798.68 350.02,824.84 313.68,822.40 277.34,833.22 241.00,829.03' fill='#c0c000'/><polygon points='241.00,820.66 277.34,825.19 313.68,815.42 350.02,817.52 386.36,793.44 422.70,821.35 422.70,821.70 386.36,793.44 350.02,817.87 313.68,816.47 277.34,826.59 241.00,821.35' fill='#c000c0'/><polygon points='241.00,820.66 277.34,825.19 313.68,815.42 350.02,815.77 386.36,792.74 422.70,821.35 422.70,821.35 386.36,793.44 350.02,817.52 313.68,815.42 277.34,825.19 241.00,820.66' fill='#00c0c0'/><polygon points='241.00,809.49 277.34,794.84 313.68,789.26 350.02,780.18 386.36,735.87 422.70,791.00 422.70,821.35 386.36,792.74 350.02,815.77 313.68,815.42 277.34,825.19 241.00,820.66' fill='#404040'/><polygon points='241.00,806.00 277.34,794.84 313.68,788.56 350.02,778.09 386.36,735.18 422.70,789.95 422.70,791.00 386.36,735.87 350.02,780.18 313.68,789.26 277.34,794.84 241.00,809.49' fill='#ff4040'/><polygon points='241.00,804.96 277.34,794.84 313.68,788.56 350.02,777.74 386.36,734.13 422.70,789.95 422.70,789.95 386.36,735.18 350.02,778.09 313.68,788.56 277.34,794.84 241.00,806.00' fill='#4040ff'/><rect x='216.5' y='728.5' width='233' height='126' fill='none' stroke='#ababab' stroke-width='1'/><line x1='216.5' y1='728' x2='216.5' y2='855' stroke='#808080' stroke-width='1'/><line x1='216' y1='854.5' x2='450' y2='854.5' stroke='#808080' stroke-width='1'/><line x1='214' y1='854.5' x2='216' y2='854.5' stroke='#808080' stroke-width='1'/><text x='209.5' y='858.7' text-anchor='end' font-family='Liberation Sans' font-size='10.5' fill='#101010'>0</text><line x1='214' y1='837.5' x2='216' y2='837.5' stroke='#808080' stroke-width='1'/><text x='209.5' y='841.7' text-anchor='end' font-family='Liberation Sans' font-size='10.5' fill='#101010'>50</text><line x1='214' y1='819.5' x2='216' y2='819.5' stroke='#808080' stroke-width='1'/><text x='209.5' y='823.7' text-anchor='end' font-family='Liberation Sans' font-size='10.5' fill='#101010'>100</text><line x1='214' y1='802.5' x2='216' y2='802.5' stroke='#808080' stroke-width='1'/><text x='209.5' y='806.7' text-anchor='end' font-family='Liberation Sans' font-size='10.5' fill='#101010'>150</text><line x1='214' y1='784.5' x2='216' y2='784.5' stroke='#808080' stroke-width='1'/><text x='209.5' y='788.7' text-anchor='end' font-family='Liberation Sans' font-size='10.5' fill='#101010'>200</text><line x1='214' y1='767.5' x2='216' y2='767.5' stroke='#808080' stroke-width='1'/><text x='209.5' y='771.7' text-anchor='end' font-family='Liberation Sans' font-size='10.5' fill='#101010'>250</text><line x1='214' y1='749.5' x2='216' y2='749.5' stroke='#808080' stroke-width='1'/><text x='209.5' y='753.7' text-anchor='end' font-family='Liberation Sans' font-size='10.5' fill='#101010'>300</text><line x1='214' y1='732.5' x2='216' y2='732.5' stroke='#808080' stroke-width='1'/><text x='209.5' y='736.7' text-anchor='end' font-family='Liberation Sans' font-size='10.5' fill='#101010'>350</text><text x='245.0' y='869.6' text-anchor='end' font-family='Liberation Sans' font-size='10.2' fill='#383838' transform='rotate(-22.5 245.0 869.6)'>DEC-2005</text><text x='281.3' y='869.6' text-anchor='end' font-family='Liberation Sans' font-size='10.2' fill='#383838' transform='rotate(-22.5 281.3 869.6)'>JAN-2006</text><text x='317.7' y='869.6' text-anchor='end' font-family='Liberation Sans' font-size='10.2' fill='#383838' transform='rotate(-22.5 317.7 869.6)'>FEB-2006</text><text x='354.0' y='869.6' text-anchor='end' font-family='Liberation Sans' font-size='10.2' fill='#383838' transform='rotate(-22.5 354.0 869.6)'>MAR-2006</text><text x='390.4' y='869.6' text-anchor='end' font-family='Liberation Sans' font-size='10.2' fill='#383838' transform='rotate(-22.5 390.4 869.6)'>APR-2006</text><text x='426.7' y='869.6' text-anchor='end' font-family='Liberation Sans' font-size='10.2' fill='#383838' transform='rotate(-22.5 426.7 869.6)'>MAY-2006</text></svg>
<div class=t style='left:27.80px;top:7.00px;font-family:"Liberation Sans", sans-serif;font-size:13px;line-height:13px;font-weight:normal;color:#181830;letter-spacing:0.409px;-webkit-text-stroke:0.55px #181830;text-shadow:1px 1px 0 rgba(255,255,255,.35);'>Page 2 - Microsoft Internet Explorer</div><div class=t style='left:10.30px;top:32.00px;font-family:"Liberation Sans", sans-serif;font-size:11px;line-height:11px;font-weight:normal;color:#000;letter-spacing:0.000px;transform:scaleX(0.8065);transform-origin:0.00px 0;'>File</div><div class=t style='left:41.80px;top:32.00px;font-family:"Liberation Sans", sans-serif;font-size:11px;line-height:11px;font-weight:normal;color:#000;letter-spacing:0.000px;transform:scaleX(0.9313);transform-origin:0.00px 0;'>Edit</div><div class=t style='left:76.10px;top:32.00px;font-family:"Liberation Sans", sans-serif;font-size:11px;line-height:11px;font-weight:normal;color:#000;letter-spacing:0.000px;transform:scaleX(0.8734);transform-origin:0.00px 0;'>View</div><div class=t style='left:113.40px;top:32.00px;font-family:"Liberation Sans", sans-serif;font-size:11px;line-height:11px;font-weight:normal;color:#000;letter-spacing:0.000px;transform:scaleX(0.9730);transform-origin:0.00px 0;'>Favorites</div><div class=t style='left:174.90px;top:32.00px;font-family:"Liberation Sans", sans-serif;font-size:11px;line-height:11px;font-weight:normal;color:#000;letter-spacing:0.000px;transform:scaleX(0.9206);transform-origin:0.00px 0;'>Tools</div><div class=t style='left:216.00px;top:32.00px;font-family:"Liberation Sans", sans-serif;font-size:11px;line-height:11px;font-weight:normal;color:#000;letter-spacing:0.000px;transform:scaleX(0.8753);transform-origin:0.00px 0;'>Help</div><div class=t style='left:268.40px;top:32.00px;font-family:"Liberation Sans", sans-serif;font-size:11px;line-height:11px;font-weight:normal;color:#767676;letter-spacing:0.000px;transform:scaleX(0.9106);transform-origin:0.00px 0;'>Address</div><div class=t style='left:333.70px;top:32.00px;font-family:"Liberation Sans", sans-serif;font-size:11px;line-height:11px;font-weight:normal;color:#000;letter-spacing:0.056px;width:882px;overflow:hidden;'>http://localhost/portal/site/bonney/template.PAGE/menuitem.90ece166a53ab5cfa9970e10aa47dc0a/?javax.portlet.tpst=72fb8ad9b73f45bca13f52e59eb5dc0a&amp;javax.portlet.prp_72f</div><div class=t style='left:28.80px;top:60.00px;font-family:"Liberation Sans", sans-serif;font-size:11px;line-height:11px;font-weight:normal;color:#000;letter-spacing:0.000px;transform:scaleX(0.8536);transform-origin:0.00px 0;'>Back</div><div class=t style='left:214.90px;top:60.00px;font-family:"Liberation Sans", sans-serif;font-size:11px;line-height:11px;font-weight:normal;color:#000;letter-spacing:0.000px;transform:scaleX(0.9126);transform-origin:0.00px 0;'>Search</div><div class=t style='left:278.60px;top:60.00px;font-family:"Liberation Sans", sans-serif;font-size:11px;line-height:11px;font-weight:normal;color:#000;letter-spacing:0.000px;transform:scaleX(0.9708);transform-origin:0.00px 0;'>Favorites</div><div class=t style='left:11.00px;top:88.00px;font-family:"Liberation Sans", sans-serif;font-size:16px;line-height:16px;font-weight:bold;color:#ffffff;letter-spacing:3.122px;'>bonney</div><div class=t style='left:1029.70px;top:92.00px;font-family:"Liberation Sans", sans-serif;font-size:10px;line-height:10px;font-weight:normal;color:#ffffff;letter-spacing:1.147px;'>Site Home</div><div class=t style='left:1100.80px;top:92.00px;font-family:"Liberation Sans", sans-serif;font-size:10px;line-height:10px;font-weight:normal;color:#ffffff;letter-spacing:0.919px;'>Site Colors</div><div class=t style='left:1173.70px;top:92.00px;font-family:"Liberation Sans", sans-serif;font-size:10px;line-height:10px;font-weight:normal;color:#ffffff;letter-spacing:1.185px;'>Administration</div><div class=t style='left:11.60px;top:116.00px;font-family:"Liberation Sans", sans-serif;font-size:10px;line-height:10px;font-weight:normal;color:#e8eefa;letter-spacing:1.247px;'>You are logged in as admin account</div><div class=t style='left:1141.00px;top:116.00px;font-family:"Liberation Sans", sans-serif;font-size:10px;line-height:10px;font-weight:normal;color:#e8eefa;letter-spacing:0.793px;'>My Account</div><div class=t style='left:1214.80px;top:116.00px;font-family:"Liberation Sans", sans-serif;font-size:10px;line-height:10px;font-weight:normal;color:#e8eefa;letter-spacing:1.258px;'>Logout</div><div class=t style='left:7.20px;top:137.00px;font-family:"Liberation Sans", sans-serif;font-size:10px;line-height:10px;font-weight:normal;color:#101010;letter-spacing:0.833px;'>Page 1</div><div class=t style='left:59.80px;top:137.00px;font-family:"Liberation Sans", sans-serif;font-size:10px;line-height:10px;font-weight:normal;color:#101010;letter-spacing:1.053px;'>Page 2</div><div class=t style='left:112.40px;top:137.00px;font-family:"Liberation Sans", sans-serif;font-size:10px;line-height:10px;font-weight:normal;color:#101010;letter-spacing:1.113px;'>Page 3</div><div class=t style='left:164.90px;top:137.00px;font-family:"Liberation Sans", sans-serif;font-size:10px;line-height:10px;font-weight:normal;color:#101010;letter-spacing:0.948px;'>My Pages</div><div class=t style='left:11.00px;top:157.00px;font-family:"Liberation Sans", sans-serif;font-size:16px;line-height:16px;font-weight:bold;color:#000000;letter-spacing:-0.177px;'>Page 2</div><div class=t style='left:1081.10px;top:161.00px;font-family:"Liberation Sans", sans-serif;font-size:10px;line-height:10px;font-weight:normal;color:#202020;letter-spacing:0.930px;'>Add Portlets</div><div class=t style='left:1164.70px;top:161.00px;font-family:"Liberation Sans", sans-serif;font-size:10px;line-height:10px;font-weight:normal;color:#202020;letter-spacing:0.996px;'>Arrange Portlets</div><div class=t style='left:19.80px;top:194.00px;font-family:"Liberation Sans", sans-serif;font-size:10px;line-height:10px;font-weight:bold;color:#101830;letter-spacing:0.179px;-webkit-text-stroke:0.25px #101830;'>Metric Viewer Portlet</div><div class=t style='left:189.60px;top:221.00px;font-family:"Liberation Sans", sans-serif;font-size:10px;line-height:10px;font-weight:bold;color:#101010;letter-spacing:1.057px;-webkit-text-stroke:0.25px #101010;'>Category:</div><div class=t style='left:255.60px;top:221.00px;font-family:"Liberation Sans", sans-serif;font-size:10px;line-height:10px;font-weight:normal;color:#101010;letter-spacing:1.183px;'>IDE Usage -- Program Tabs</div><div class=t style='left:188.00px;top:251.00px;font-family:"Liberation Sans", sans-serif;font-size:10px;line-height:10px;font-weight:bold;color:#101010;letter-spacing:0.708px;-webkit-text-stroke:0.25px #101010;'>Metric:</div><div class=t style='left:236.00px;top:251.00px;font-family:"Liberation Sans", sans-serif;font-size:10px;line-height:10px;font-weight:normal;color:#101010;letter-spacing:1.232px;'>Hits Int/Ext - 6 Month Trend</div><div class=t style='left:229.80px;top:281.00px;font-family:"Liberation Sans", sans-serif;font-size:10px;line-height:10px;font-weight:bold;color:#101010;letter-spacing:1.018px;-webkit-text-stroke:0.25px #101010;'>Internal Trend by Program Tabs</div><div class=t style='left:268.00px;top:292.00px;font-family:"Liberation Sans", sans-serif;font-size:10px;line-height:10px;font-weight:normal;color:#7a8aa6;letter-spacing:0.894px;'>Back to Metric View</div><div class=t style='left:145.20px;top:308.00px;font-family:"Liberation Sans", sans-serif;font-size:10px;line-height:10px;font-weight:bold;color:#101010;letter-spacing:0.939px;-webkit-text-stroke:0.25px #101010;'>DEC-2005</div><div class=t style='left:211.90px;top:308.00px;font-family:"Liberation Sans", sans-serif;font-size:10px;line-height:10px;font-weight:bold;color:#101010;letter-spacing:1.169px;-webkit-text-stroke:0.25px #101010;'>JAN-2006</div><div class=t style='left:278.90px;top:308.00px;font-family:"Liberation Sans", sans-serif;font-size:10px;line-height:10px;font-weight:bold;color:#101010;letter-spacing:1.026px;-webkit-text-stroke:0.25px #101010;'>FEB-2006</div><div class=t style='left:344.90px;top:308.00px;font-family:"Liberation Sans", sans-serif;font-size:10px;line-height:10px;font-weight:bold;color:#101010;letter-spacing:1.173px;-webkit-text-stroke:0.25px #101010;'>MAR-2006</div><div class=t style='left:415.10px;top:308.00px;font-family:"Liberation Sans", sans-serif;font-size:10px;line-height:10px;font-weight:bold;color:#101010;letter-spacing:1.339px;-webkit-text-stroke:0.25px #101010;'>APR-2006</div><div class=t style='left:483.60px;top:308.00px;font-family:"Liberation Sans", sans-serif;font-size:10px;line-height:10px;font-weight:bold;color:#101010;letter-spacing:1.619px;-webkit-text-stroke:0.25px #101010;'>MAY-2006</div><div class=t style='left:93.25px;top:327.00px;font-family:"Liberation Sans", sans-serif;font-size:10px;line-height:10px;font-weight:normal;color:#181818;letter-spacing:0.517px;'>Atlas</div><div class=t style='left:139.00px;top:327.00px;font-family:"Liberation Sans", sans-serif;font-size:10px;line-height:10px;font-weight:normal;color:#181818;letter-spacing:1.000px;width:66px;text-align:center;padding-left:1px;box-sizing:border-box;'>11</div><div class=t style='left:206.00px;top:327.00px;font-family:"Liberation Sans", sans-serif;font-size:10px;line-height:10px;font-weight:normal;color:#181818;letter-spacing:1.000px;width:66px;text-align:center;padding-left:1px;box-sizing:border-box;'>25</div><div class=t style='left:273.00px;top:327.00px;font-family:"Liberation Sans", sans-serif;font-size:10px;line-height:10px;font-weight:normal;color:#181818;letter-spacing:1.000px;width:66px;text-align:center;padding-left:1px;box-sizing:border-box;'>0</div><div class=t style='left:340.00px;top:327.00px;font-family:"Liberation Sans", sans-serif;font-size:10px;line-height:10px;font-weight:normal;color:#181818;letter-spacing:1.000px;width:68px;text-align:center;padding-left:1px;box-sizing:border-box;'>0</div><div class=t style='left:409.00px;top:327.00px;font-family:"Liberation Sans", sans-serif;font-size:10px;line-height:10px;font-weight:normal;color:#181818;letter-spacing:1.000px;width:68px;text-align:center;padding-left:1px;box-sizing:border-box;'>0</div><div class=t style='left:478.00px;top:327.00px;font-family:"Liberation Sans", sans-serif;font-size:10px;line-height:10px;font-weight:normal;color:#181818;letter-spacing:1.000px;width:70px;text-align:center;padding-left:1px;box-sizing:border-box;'>0</div><div class=t style='left:86.35px;top:348.00px;font-family:"Liberation Sans", sans-serif;font-size:10px;line-height:10px;font-weight:normal;color:#181818;letter-spacing:0.643px;'>Bus Sol</div><div class=t style='left:139.00px;top:348.00px;font-family:"Liberation Sans", sans-serif;font-size:10px;line-height:10px;font-weight:normal;color:#181818;letter-spacing:1.000px;width:66px;text-align:center;padding-left:1px;box-sizing:border-box;'>0</div><div class=t style='left:206.00px;top:348.00px;font-family:"Liberation Sans", sans-serif;font-size:10px;line-height:10px;font-weight:normal;color:#181818;letter-spacing:1.000px;width:66px;text-align:center;padding-left:1px;box-sizing:border-box;'>0</div><div class=t style='left:273.00px;top:348.00px;font-family:"Liberation Sans", sans-serif;font-size:10px;line-height:10px;font-weight:normal;color:#181818;letter-spacing:1.000px;width:66px;text-align:center;padding-left:1px;box-sizing:border-box;'>3</div><div class=t style='left:340.00px;top:348.00px;font-family:"Liberation Sans", sans-serif;font-size:10px;line-height:10px;font-weight:normal;color:#181818;letter-spacing:1.000px;width:68px;text-align:center;padding-left:1px;box-sizing:border-box;'>2</div><div class=t style='left:409.00px;top:348.00px;font-family:"Liberation Sans", sans-serif;font-size:10px;line-height:10px;font-weight:normal;color:#181818;letter-spacing:1.000px;width:68px;text-align:center;padding-left:1px;box-sizing:border-box;'>0</div><div class=t style='left:478.00px;top:348.00px;font-family:"Liberation Sans", sans-serif;font-size:10px;line-height:10px;font-weight:normal;color:#181818;letter-spacing:1.000px;width:70px;text-align:center;padding-left:1px;box-sizing:border-box;'>0</div><div class=t style='left:96.10px;top:369.00px;font-family:"Liberation Sans", sans-serif;font-size:10px;line-height:10px;font-weight:normal;color:#181818;letter-spacing:0.050px;'>CEV</div><div class=t style='left:139.00px;top:369.00px;font-family:"Liberation Sans", sans-serif;font-size:10px;line-height:10px;font-weight:normal;color:#181818;letter-spacing:1.000px;width:66px;text-align:center;padding-left:1px;box-sizing:border-box;'>3</div><div class=t style='left:206.00px;top:369.00px;font-family:"Liberation Sans", sans-serif;font-size:10px;line-height:10px;font-weight:normal;color:#181818;letter-spacing:1.000px;width:66px;text-align:center;padding-left:1px;box-sizing:border-box;'>1</div><div class=t style='left:273.00px;top:369.00px;font-family:"Liberation Sans", sans-serif;font-size:10px;line-height:10px;font-weight:normal;color:#181818;letter-spacing:1.000px;width:66px;text-align:center;padding-left:1px;box-sizing:border-box;'>4</div><div class=t style='left:340.00px;top:369.00px;font-family:"Liberation Sans", sans-serif;font-size:10px;line-height:10px;font-weight:normal;color:#181818;letter-spacing:1.000px;width:68px;text-align:center;padding-left:1px;box-sizing:border-box;'>0</div><div class=t style='left:409.00px;top:369.00px;font-family:"Liberation Sans", sans-serif;font-size:10px;line-height:10px;font-weight:normal;color:#181818;letter-spacing:1.000px;width:68px;text-align:center;padding-left:1px;box-sizing:border-box;'>0</div><div class=t style='left:478.00px;top:369.00px;font-family:"Liberation Sans", sans-serif;font-size:10px;line-height:10px;font-weight:normal;color:#181818;letter-spacing:1.000px;width:70px;text-align:center;padding-left:1px;box-sizing:border-box;'>0</div><div class=t style='left:95.75px;top:390.00px;font-family:"Liberation Sans", sans-serif;font-size:10px;line-height:10px;font-weight:normal;color:#181818;letter-spacing:0.650px;'>CIO</div><div class=t style='left:139.00px;top:390.00px;font-family:"Liberation Sans", sans-serif;font-size:10px;line-height:10px;font-weight:normal;color:#181818;letter-spacing:1.000px;width:66px;text-align:center;padding-left:1px;box-sizing:border-box;'>0</div><div class=t style='left:206.00px;top:390.00px;font-family:"Liberation Sans", sans-serif;font-size:10px;line-height:10px;font-weight:normal;color:#181818;letter-spacing:1.000px;width:66px;text-align:center;padding-left:1px;box-sizing:border-box;'>3</div><div class=t style='left:273.00px;top:390.00px;font-family:"Liberation Sans", sans-serif;font-size:10px;line-height:10px;font-weight:normal;color:#181818;letter-spacing:1.000px;width:66px;text-align:center;padding-left:1px;box-sizing:border-box;'>0</div><div class=t style='left:340.00px;top:390.00px;font-family:"Liberation Sans", sans-serif;font-size:10px;line-height:10px;font-weight:normal;color:#181818;letter-spacing:1.000px;width:68px;text-align:center;padding-left:1px;box-sizing:border-box;'>0</div><div class=t style='left:409.00px;top:390.00px;font-family:"Liberation Sans", sans-serif;font-size:10px;line-height:10px;font-weight:normal;color:#181818;letter-spacing:1.000px;width:68px;text-align:center;padding-left:1px;box-sizing:border-box;'>6</div><div class=t style='left:478.00px;top:390.00px;font-family:"Liberation Sans", sans-serif;font-size:10px;line-height:10px;font-weight:normal;color:#181818;letter-spacing:1.000px;width:70px;text-align:center;padding-left:1px;box-sizing:border-box;'>3</div><div class=t style='left:80.65px;top:411.00px;font-family:"Liberation Sans", sans-serif;font-size:10px;line-height:10px;font-weight:normal;color:#181818;letter-spacing:0.683px;'>CIPS/PAL</div><div class=t style='left:139.00px;top:411.00px;font-family:"Liberation Sans", sans-serif;font-size:10px;line-height:10px;font-weight:normal;color:#181818;letter-spacing:1.000px;width:66px;text-align:center;padding-left:1px;box-sizing:border-box;'>0</div><div class=t style='left:206.00px;top:411.00px;font-family:"Liberation Sans", sans-serif;font-size:10px;line-height:10px;font-weight:normal;color:#181818;letter-spacing:1.000px;width:66px;text-align:center;padding-left:1px;box-sizing:border-box;'>0</div><div class=t style='left:273.00px;top:411.00px;font-family:"Liberation Sans", sans-serif;font-size:10px;line-height:10px;font-weight:normal;color:#181818;letter-spacing:1.000px;width:66px;text-align:center;padding-left:1px;box-sizing:border-box;'>13</div><div class=t style='left:340.00px;top:411.00px;font-family:"Liberation Sans", sans-serif;font-size:10px;line-height:10px;font-weight:normal;color:#181818;letter-spacing:1.000px;width:68px;text-align:center;padding-left:1px;box-sizing:border-box;'>70</div><div class=t style='left:409.00px;top:411.00px;font-family:"Liberation Sans", sans-serif;font-size:10px;line-height:10px;font-weight:normal;color:#181818;letter-spacing:1.000px;width:68px;text-align:center;padding-left:1px;box-sizing:border-box;'>125</div><div class=t style='left:478.00px;top:411.00px;font-family:"Liberation Sans", sans-serif;font-size:10px;line-height:10px;font-weight:normal;color:#181818;letter-spacing:1.000px;width:70px;text-align:center;padding-left:1px;box-sizing:border-box;'>55</div><div class=t style='left:96.25px;top:432.00px;font-family:"Liberation Sans", sans-serif;font-size:10px;line-height:10px;font-weight:normal;color:#181818;letter-spacing:0.050px;'>ERA</div><div class=t style='left:139.00px;top:432.00px;font-family:"Liberation Sans", sans-serif;font-size:10px;line-height:10px;font-weight:normal;color:#181818;letter-spacing:1.000px;width:66px;text-align:center;padding-left:1px;box-sizing:border-box;'>0</div><div class=t style='left:206.00px;top:432.00px;font-family:"Liberation Sans", sans-serif;font-size:10px;line-height:10px;font-weight:normal;color:#181818;letter-spacing:1.000px;width:66px;text-align:center;padding-left:1px;box-sizing:border-box;'>0</div><div class=t style='left:273.00px;top:432.00px;font-family:"Liberation Sans", sans-serif;font-size:10px;line-height:10px;font-weight:normal;color:#181818;letter-spacing:1.000px;width:66px;text-align:center;padding-left:1px;box-sizing:border-box;'>39</div><div class=t style='left:340.00px;top:432.00px;font-family:"Liberation Sans", sans-serif;font-size:10px;line-height:10px;font-weight:normal;color:#181818;letter-spacing:1.000px;width:68px;text-align:center;padding-left:1px;box-sizing:border-box;'>6</div><div class=t style='left:409.00px;top:432.00px;font-family:"Liberation Sans", sans-serif;font-size:10px;line-height:10px;font-weight:normal;color:#181818;letter-spacing:1.000px;width:68px;text-align:center;padding-left:1px;box-sizing:border-box;'>23</div><div class=t style='left:478.00px;top:432.00px;font-family:"Liberation Sans", sans-serif;font-size:10px;line-height:10px;font-weight:normal;color:#181818;letter-spacing:1.000px;width:70px;text-align:center;padding-left:1px;box-sizing:border-box;'>6</div><div class=t style='left:79.35px;top:453.00px;font-family:"Liberation Sans", sans-serif;font-size:10px;line-height:10px;font-weight:normal;color:#181818;letter-spacing:0.569px;'>ERM/IPPD</div><div class=t style='left:139.00px;top:453.00px;font-family:"Liberation Sans", sans-serif;font-size:10px;line-height:10px;font-weight:normal;color:#181818;letter-spacing:1.000px;width:66px;text-align:center;padding-left:1px;box-sizing:border-box;'>0</div><div class=t style='left:206.00px;top:453.00px;font-family:"Liberation Sans", sans-serif;font-size:10px;line-height:10px;font-weight:normal;color:#181818;letter-spacing:1.000px;width:66px;text-align:center;padding-left:1px;box-sizing:border-box;'>0</div><div class=t style='left:273.00px;top:453.00px;font-family:"Liberation Sans", sans-serif;font-size:10px;line-height:10px;font-weight:normal;color:#181818;letter-spacing:1.000px;width:66px;text-align:center;padding-left:1px;box-sizing:border-box;'>0</div><div class=t style='left:340.00px;top:453.00px;font-family:"Liberation Sans", sans-serif;font-size:10px;line-height:10px;font-weight:normal;color:#181818;letter-spacing:1.000px;width:68px;text-align:center;padding-left:1px;box-sizing:border-box;'>3</div><div class=t style='left:409.00px;top:453.00px;font-family:"Liberation Sans", sans-serif;font-size:10px;line-height:10px;font-weight:normal;color:#181818;letter-spacing:1.000px;width:68px;text-align:center;padding-left:1px;box-sizing:border-box;'>0</div><div class=t style='left:478.00px;top:453.00px;font-family:"Liberation Sans", sans-serif;font-size:10px;line-height:10px;font-weight:normal;color:#181818;letter-spacing:1.000px;width:70px;text-align:center;padding-left:1px;box-sizing:border-box;'>0</div><div class=t style='left:85.35px;top:474.00px;font-family:"Liberation Sans", sans-serif;font-size:10px;line-height:10px;font-weight:normal;color:#181818;letter-spacing:0.175px;'>GOES-R</div><div class=t style='left:139.00px;top:474.00px;font-family:"Liberation Sans", sans-serif;font-size:10px;line-height:10px;font-weight:normal;color:#181818;letter-spacing:1.000px;width:66px;text-align:center;padding-left:1px;box-sizing:border-box;'>6</div><div class=t style='left:206.00px;top:474.00px;font-family:"Liberation Sans", sans-serif;font-size:10px;line-height:10px;font-weight:normal;color:#181818;letter-spacing:1.000px;width:66px;text-align:center;padding-left:1px;box-sizing:border-box;'>20</div><div class=t style='left:273.00px;top:474.00px;font-family:"Liberation Sans", sans-serif;font-size:10px;line-height:10px;font-weight:normal;color:#181818;letter-spacing:1.000px;width:66px;text-align:center;padding-left:1px;box-sizing:border-box;'>12</div><div class=t style='left:340.00px;top:474.00px;font-family:"Liberation Sans", sans-serif;font-size:10px;line-height:10px;font-weight:normal;color:#181818;letter-spacing:1.000px;width:68px;text-align:center;padding-left:1px;box-sizing:border-box;'>0</div><div class=t style='left:409.00px;top:474.00px;font-family:"Liberation Sans", sans-serif;font-size:10px;line-height:10px;font-weight:normal;color:#181818;letter-spacing:1.000px;width:68px;text-align:center;padding-left:1px;box-sizing:border-box;'>0</div><div class=t style='left:478.00px;top:474.00px;font-family:"Liberation Sans", sans-serif;font-size:10px;line-height:10px;font-weight:normal;color:#181818;letter-spacing:1.000px;width:70px;text-align:center;padding-left:1px;box-sizing:border-box;'>0</div><div class=t style='left:86.80px;top:495.00px;font-family:"Liberation Sans", sans-serif;font-size:10px;line-height:10px;font-weight:normal;color:#181818;letter-spacing:0.261px;'>HRVDM</div><div class=t style='left:139.00px;top:495.00px;font-family:"Liberation Sans", sans-serif;font-size:10px;line-height:10px;font-weight:normal;color:#181818;letter-spacing:1.000px;width:66px;text-align:center;padding-left:1px;box-sizing:border-box;'>0</div><div class=t style='left:206.00px;top:495.00px;font-family:"Liberation Sans", sans-serif;font-size:10px;line-height:10px;font-weight:normal;color:#181818;letter-spacing:1.000px;width:66px;text-align:center;padding-left:1px;box-sizing:border-box;'>0</div><div class=t style='left:273.00px;top:495.00px;font-family:"Liberation Sans", sans-serif;font-size:10px;line-height:10px;font-weight:normal;color:#181818;letter-spacing:1.000px;width:66px;text-align:center;padding-left:1px;box-sizing:border-box;'>0</div><div class=t style='left:340.00px;top:495.00px;font-family:"Liberation Sans", sans-serif;font-size:10px;line-height:10px;font-weight:normal;color:#181818;letter-spacing:1.000px;width:68px;text-align:center;padding-left:1px;box-sizing:border-box;'>0</div><div class=t style='left:409.00px;top:495.00px;font-family:"Liberation Sans", sans-serif;font-size:10px;line-height:10px;font-weight:normal;color:#181818;letter-spacing:1.000px;width:68px;text-align:center;padding-left:1px;box-sizing:border-box;'>0</div><div class=t style='left:478.00px;top:495.00px;font-family:"Liberation Sans", sans-serif;font-size:10px;line-height:10px;font-weight:normal;color:#181818;letter-spacing:1.000px;width:70px;text-align:center;padding-left:1px;box-sizing:border-box;'>2</div><div class=t style='left:94.75px;top:516.00px;font-family:"Liberation Sans", sans-serif;font-size:10px;line-height:10px;font-weight:normal;color:#181818;letter-spacing:0.050px;'>MKV</div><div class=t style='left:139.00px;top:516.00px;font-family:"Liberation Sans", sans-serif;font-size:10px;line-height:10px;font-weight:normal;color:#181818;letter-spacing:1.000px;width:66px;text-align:center;padding-left:1px;box-sizing:border-box;'>10</div><div class=t style='left:206.00px;top:516.00px;font-family:"Liberation Sans", sans-serif;font-size:10px;line-height:10px;font-weight:normal;color:#181818;letter-spacing:1.000px;width:66px;text-align:center;padding-left:1px;box-sizing:border-box;'>0</div><div class=t style='left:273.00px;top:516.00px;font-family:"Liberation Sans", sans-serif;font-size:10px;line-height:10px;font-weight:normal;color:#181818;letter-spacing:1.000px;width:66px;text-align:center;padding-left:1px;box-sizing:border-box;'>9</div><div class=t style='left:340.00px;top:516.00px;font-family:"Liberation Sans", sans-serif;font-size:10px;line-height:10px;font-weight:normal;color:#181818;letter-spacing:1.000px;width:68px;text-align:center;padding-left:1px;box-sizing:border-box;'>1</div><div class=t style='left:409.00px;top:516.00px;font-family:"Liberation Sans", sans-serif;font-size:10px;line-height:10px;font-weight:normal;color:#181818;letter-spacing:1.000px;width:68px;text-align:center;padding-left:1px;box-sizing:border-box;'>0</div><div class=t style='left:478.00px;top:516.00px;font-family:"Liberation Sans", sans-serif;font-size:10px;line-height:10px;font-weight:normal;color:#181818;letter-spacing:1.000px;width:70px;text-align:center;padding-left:1px;box-sizing:border-box;'>0</div><div class=t style='left:94.95px;top:537.00px;font-family:"Liberation Sans", sans-serif;font-size:10px;line-height:10px;font-weight:normal;color:#181818;letter-spacing:0.050px;'>MPX</div><div class=t style='left:139.00px;top:537.00px;font-family:"Liberation Sans", sans-serif;font-size:10px;line-height:10px;font-weight:normal;color:#181818;letter-spacing:1.000px;width:66px;text-align:center;padding-left:1px;box-sizing:border-box;'>38</div><div class=t style='left:206.00px;top:537.00px;font-family:"Liberation Sans", sans-serif;font-size:10px;line-height:10px;font-weight:normal;color:#181818;letter-spacing:1.000px;width:66px;text-align:center;padding-left:1px;box-sizing:border-box;'>10</div><div class=t style='left:273.00px;top:537.00px;font-family:"Liberation Sans", sans-serif;font-size:10px;line-height:10px;font-weight:normal;color:#181818;letter-spacing:1.000px;width:66px;text-align:center;padding-left:1px;box-sizing:border-box;'>6</div><div class=t style='left:340.00px;top:537.00px;font-family:"Liberation Sans", sans-serif;font-size:10px;line-height:10px;font-weight:normal;color:#181818;letter-spacing:1.000px;width:68px;text-align:center;padding-left:1px;box-sizing:border-box;'>0</div><div class=t style='left:409.00px;top:537.00px;font-family:"Liberation Sans", sans-serif;font-size:10px;line-height:10px;font-weight:normal;color:#181818;letter-spacing:1.000px;width:68px;text-align:center;padding-left:1px;box-sizing:border-box;'>3</div><div class=t style='left:478.00px;top:537.00px;font-family:"Liberation Sans", sans-serif;font-size:10px;line-height:10px;font-weight:normal;color:#181818;letter-spacing:1.000px;width:70px;text-align:center;padding-left:1px;box-sizing:border-box;'>1</div><div class=t style='left:90.15px;top:558.00px;font-family:"Liberation Sans", sans-serif;font-size:10px;line-height:10px;font-weight:normal;color:#181818;letter-spacing:0.057px;'>MUOS</div><div class=t style='left:139.00px;top:558.00px;font-family:"Liberation Sans", sans-serif;font-size:10px;line-height:10px;font-weight:normal;color:#181818;letter-spacing:1.000px;width:66px;text-align:center;padding-left:1px;box-sizing:border-box;'>5</div><div class=t style='left:206.00px;top:558.00px;font-family:"Liberation Sans", sans-serif;font-size:10px;line-height:10px;font-weight:normal;color:#181818;letter-spacing:1.000px;width:66px;text-align:center;padding-left:1px;box-sizing:border-box;'>2</div><div class=t style='left:273.00px;top:558.00px;font-family:"Liberation Sans", sans-serif;font-size:10px;line-height:10px;font-weight:normal;color:#181818;letter-spacing:1.000px;width:66px;text-align:center;padding-left:1px;box-sizing:border-box;'>6</div><div class=t style='left:340.00px;top:558.00px;font-family:"Liberation Sans", sans-serif;font-size:10px;line-height:10px;font-weight:normal;color:#181818;letter-spacing:1.000px;width:68px;text-align:center;padding-left:1px;box-sizing:border-box;'>3</div><div class=t style='left:409.00px;top:558.00px;font-family:"Liberation Sans", sans-serif;font-size:10px;line-height:10px;font-weight:normal;color:#181818;letter-spacing:1.000px;width:68px;text-align:center;padding-left:1px;box-sizing:border-box;'>3</div><div class=t style='left:478.00px;top:558.00px;font-family:"Liberation Sans", sans-serif;font-size:10px;line-height:10px;font-weight:normal;color:#181818;letter-spacing:1.000px;width:70px;text-align:center;padding-left:1px;box-sizing:border-box;'>5</div><div class=t style='left:91.70px;top:579.00px;font-family:"Liberation Sans", sans-serif;font-size:10px;line-height:10px;font-weight:normal;color:#181818;letter-spacing:0.050px;'>PSPM</div><div class=t style='left:139.00px;top:579.00px;font-family:"Liberation Sans", sans-serif;font-size:10px;line-height:10px;font-weight:normal;color:#181818;letter-spacing:1.000px;width:66px;text-align:center;padding-left:1px;box-sizing:border-box;'>22</div><div class=t style='left:206.00px;top:579.00px;font-family:"Liberation Sans", sans-serif;font-size:10px;line-height:10px;font-weight:normal;color:#181818;letter-spacing:1.000px;width:66px;text-align:center;padding-left:1px;box-sizing:border-box;'>19</div><div class=t style='left:273.00px;top:579.00px;font-family:"Liberation Sans", sans-serif;font-size:10px;line-height:10px;font-weight:normal;color:#181818;letter-spacing:1.000px;width:66px;text-align:center;padding-left:1px;box-sizing:border-box;'>17</div><div class=t style='left:340.00px;top:579.00px;font-family:"Liberation Sans", sans-serif;font-size:10px;line-height:10px;font-weight:normal;color:#181818;letter-spacing:1.000px;width:68px;text-align:center;padding-left:1px;box-sizing:border-box;'>20</div><div class=t style='left:409.00px;top:579.00px;font-family:"Liberation Sans", sans-serif;font-size:10px;line-height:10px;font-weight:normal;color:#181818;letter-spacing:1.000px;width:68px;text-align:center;padding-left:1px;box-sizing:border-box;'>15</div><div class=t style='left:478.00px;top:579.00px;font-family:"Liberation Sans", sans-serif;font-size:10px;line-height:10px;font-weight:normal;color:#181818;letter-spacing:1.000px;width:70px;text-align:center;padding-left:1px;box-sizing:border-box;'>22</div><div class=t style='left:99.60px;top:600.00px;font-family:"Liberation Sans", sans-serif;font-size:10px;line-height:10px;font-weight:normal;color:#181818;letter-spacing:0.050px;'>SP</div><div class=t style='left:139.00px;top:600.00px;font-family:"Liberation Sans", sans-serif;font-size:10px;line-height:10px;font-weight:normal;color:#181818;letter-spacing:1.000px;width:66px;text-align:center;padding-left:1px;box-sizing:border-box;'>2</div><div class=t style='left:206.00px;top:600.00px;font-family:"Liberation Sans", sans-serif;font-size:10px;line-height:10px;font-weight:normal;color:#181818;letter-spacing:1.000px;width:66px;text-align:center;padding-left:1px;box-sizing:border-box;'>4</div><div class=t style='left:273.00px;top:600.00px;font-family:"Liberation Sans", sans-serif;font-size:10px;line-height:10px;font-weight:normal;color:#181818;letter-spacing:1.000px;width:66px;text-align:center;padding-left:1px;box-sizing:border-box;'>3</div><div class=t style='left:340.00px;top:600.00px;font-family:"Liberation Sans", sans-serif;font-size:10px;line-height:10px;font-weight:normal;color:#181818;letter-spacing:1.000px;width:68px;text-align:center;padding-left:1px;box-sizing:border-box;'>1</div><div class=t style='left:409.00px;top:600.00px;font-family:"Liberation Sans", sans-serif;font-size:10px;line-height:10px;font-weight:normal;color:#181818;letter-spacing:1.000px;width:68px;text-align:center;padding-left:1px;box-sizing:border-box;'>0</div><div class=t style='left:478.00px;top:600.00px;font-family:"Liberation Sans", sans-serif;font-size:10px;line-height:10px;font-weight:normal;color:#181818;letter-spacing:1.000px;width:70px;text-align:center;padding-left:1px;box-sizing:border-box;'>1</div><div class=t style='left:99.60px;top:621.00px;font-family:"Liberation Sans", sans-serif;font-size:10px;line-height:10px;font-weight:normal;color:#181818;letter-spacing:0.050px;'>SR</div><div class=t style='left:139.00px;top:621.00px;font-family:"Liberation Sans", sans-serif;font-size:10px;line-height:10px;font-weight:normal;color:#181818;letter-spacing:1.000px;width:66px;text-align:center;padding-left:1px;box-sizing:border-box;'>0</div><div class=t style='left:206.00px;top:621.00px;font-family:"Liberation Sans", sans-serif;font-size:10px;line-height:10px;font-weight:normal;color:#181818;letter-spacing:1.000px;width:66px;text-align:center;padding-left:1px;box-sizing:border-box;'>0</div><div class=t style='left:273.00px;top:621.00px;font-family:"Liberation Sans", sans-serif;font-size:10px;line-height:10px;font-weight:normal;color:#181818;letter-spacing:1.000px;width:66px;text-align:center;padding-left:1px;box-sizing:border-box;'>0</div><div class=t style='left:340.00px;top:621.00px;font-family:"Liberation Sans", sans-serif;font-size:10px;line-height:10px;font-weight:normal;color:#181818;letter-spacing:1.000px;width:68px;text-align:center;padding-left:1px;box-sizing:border-box;'>5</div><div class=t style='left:409.00px;top:621.00px;font-family:"Liberation Sans", sans-serif;font-size:10px;line-height:10px;font-weight:normal;color:#181818;letter-spacing:1.000px;width:68px;text-align:center;padding-left:1px;box-sizing:border-box;'>2</div><div class=t style='left:478.00px;top:621.00px;font-family:"Liberation Sans", sans-serif;font-size:10px;line-height:10px;font-weight:normal;color:#181818;letter-spacing:1.000px;width:70px;text-align:center;padding-left:1px;box-sizing:border-box;'>0</div><div class=t style='left:84.05px;top:642.00px;font-family:"Liberation Sans", sans-serif;font-size:10px;line-height:10px;font-weight:normal;color:#181818;letter-spacing:0.393px;'>SSC IDE</div><div class=t style='left:139.00px;top:642.00px;font-family:"Liberation Sans", sans-serif;font-size:10px;line-height:10px;font-weight:normal;color:#181818;letter-spacing:1.000px;width:66px;text-align:center;padding-left:1px;box-sizing:border-box;'>32</div><div class=t style='left:206.00px;top:642.00px;font-family:"Liberation Sans", sans-serif;font-size:10px;line-height:10px;font-weight:normal;color:#181818;letter-spacing:1.000px;width:66px;text-align:center;padding-left:1px;box-sizing:border-box;'>87</div><div class=t style='left:273.00px;top:642.00px;font-family:"Liberation Sans", sans-serif;font-size:10px;line-height:10px;font-weight:normal;color:#181818;letter-spacing:1.000px;width:66px;text-align:center;padding-left:1px;box-sizing:border-box;'>75</div><div class=t style='left:340.00px;top:642.00px;font-family:"Liberation Sans", sans-serif;font-size:10px;line-height:10px;font-weight:normal;color:#181818;letter-spacing:1.000px;width:68px;text-align:center;padding-left:1px;box-sizing:border-box;'>102</div><div class=t style='left:409.00px;top:642.00px;font-family:"Liberation Sans", sans-serif;font-size:10px;line-height:10px;font-weight:normal;color:#181818;letter-spacing:1.000px;width:68px;text-align:center;padding-left:1px;box-sizing:border-box;'>163</div><div class=t style='left:478.00px;top:642.00px;font-family:"Liberation Sans", sans-serif;font-size:10px;line-height:10px;font-weight:normal;color:#181818;letter-spacing:1.000px;width:70px;text-align:center;padding-left:1px;box-sizing:border-box;'>87</div><div class=t style='left:91.70px;top:663.00px;font-family:"Liberation Sans", sans-serif;font-size:10px;line-height:10px;font-weight:normal;color:#181818;letter-spacing:0.133px;'>TCPC</div><div class=t style='left:139.00px;top:663.00px;font-family:"Liberation Sans", sans-serif;font-size:10px;line-height:10px;font-weight:normal;color:#181818;letter-spacing:1.000px;width:66px;text-align:center;padding-left:1px;box-sizing:border-box;'>10</div><div class=t style='left:206.00px;top:663.00px;font-family:"Liberation Sans", sans-serif;font-size:10px;line-height:10px;font-weight:normal;color:#181818;letter-spacing:1.000px;width:66px;text-align:center;padding-left:1px;box-sizing:border-box;'>0</div><div class=t style='left:273.00px;top:663.00px;font-family:"Liberation Sans", sans-serif;font-size:10px;line-height:10px;font-weight:normal;color:#181818;letter-spacing:1.000px;width:66px;text-align:center;padding-left:1px;box-sizing:border-box;'>2</div><div class=t style='left:340.00px;top:663.00px;font-family:"Liberation Sans", sans-serif;font-size:10px;line-height:10px;font-weight:normal;color:#181818;letter-spacing:1.000px;width:68px;text-align:center;padding-left:1px;box-sizing:border-box;'>6</div><div class=t style='left:409.00px;top:663.00px;font-family:"Liberation Sans", sans-serif;font-size:10px;line-height:10px;font-weight:normal;color:#181818;letter-spacing:1.000px;width:68px;text-align:center;padding-left:1px;box-sizing:border-box;'>2</div><div class=t style='left:478.00px;top:663.00px;font-family:"Liberation Sans", sans-serif;font-size:10px;line-height:10px;font-weight:normal;color:#181818;letter-spacing:1.000px;width:70px;text-align:center;padding-left:1px;box-sizing:border-box;'>3</div><div class=t style='left:92.90px;top:684.00px;font-family:"Liberation Sans", sans-serif;font-size:10px;line-height:10px;font-weight:normal;color:#181818;letter-spacing:0.925px;'>Titan</div><div class=t style='left:139.00px;top:684.00px;font-family:"Liberation Sans", sans-serif;font-size:10px;line-height:10px;font-weight:normal;color:#181818;letter-spacing:1.000px;width:66px;text-align:center;padding-left:1px;box-sizing:border-box;'>3</div><div class=t style='left:206.00px;top:684.00px;font-family:"Liberation Sans", sans-serif;font-size:10px;line-height:10px;font-weight:normal;color:#181818;letter-spacing:1.000px;width:66px;text-align:center;padding-left:1px;box-sizing:border-box;'>0</div><div class=t style='left:273.00px;top:684.00px;font-family:"Liberation Sans", sans-serif;font-size:10px;line-height:10px;font-weight:normal;color:#181818;letter-spacing:1.000px;width:66px;text-align:center;padding-left:1px;box-sizing:border-box;'>0</div><div class=t style='left:340.00px;top:684.00px;font-family:"Liberation Sans", sans-serif;font-size:10px;line-height:10px;font-weight:normal;color:#181818;letter-spacing:1.000px;width:68px;text-align:center;padding-left:1px;box-sizing:border-box;'>1</div><div class=t style='left:409.00px;top:684.00px;font-family:"Liberation Sans", sans-serif;font-size:10px;line-height:10px;font-weight:normal;color:#181818;letter-spacing:1.000px;width:68px;text-align:center;padding-left:1px;box-sizing:border-box;'>3</div><div class=t style='left:478.00px;top:684.00px;font-family:"Liberation Sans", sans-serif;font-size:10px;line-height:10px;font-weight:normal;color:#181818;letter-spacing:1.000px;width:70px;text-align:center;padding-left:1px;box-sizing:border-box;'>0</div><div class=t style='left:105.90px;top:705.00px;font-family:"Liberation Sans", sans-serif;font-size:10px;line-height:10px;font-weight:bold;color:#101010;letter-spacing:0.708px;-webkit-text-stroke:0.25px #101010;'>Total</div><div class=t style='left:139.00px;top:705.00px;font-family:"Liberation Sans", sans-serif;font-size:10px;line-height:10px;font-weight:bold;color:#101010;letter-spacing:1.400px;width:66px;text-align:center;padding-left:1.4px;box-sizing:border-box;-webkit-text-stroke:0.25px #101010;'>142</div><div class=t style='left:206.00px;top:705.00px;font-family:"Liberation Sans", sans-serif;font-size:10px;line-height:10px;font-weight:bold;color:#101010;letter-spacing:1.400px;width:66px;text-align:center;padding-left:1.4px;box-sizing:border-box;-webkit-text-stroke:0.25px #101010;'>171</div><div class=t style='left:273.00px;top:705.00px;font-family:"Liberation Sans", sans-serif;font-size:10px;line-height:10px;font-weight:bold;color:#101010;letter-spacing:1.400px;width:66px;text-align:center;padding-left:1.4px;box-sizing:border-box;-webkit-text-stroke:0.25px #101010;'>189</div><div class=t style='left:340.00px;top:705.00px;font-family:"Liberation Sans", sans-serif;font-size:10px;line-height:10px;font-weight:bold;color:#101010;letter-spacing:1.400px;width:68px;text-align:center;padding-left:1.4px;box-sizing:border-box;-webkit-text-stroke:0.25px #101010;'>220</div><div class=t style='left:409.00px;top:705.00px;font-family:"Liberation Sans", sans-serif;font-size:10px;line-height:10px;font-weight:bold;color:#101010;letter-spacing:1.400px;width:68px;text-align:center;padding-left:1.4px;box-sizing:border-box;-webkit-text-stroke:0.25px #101010;'>345</div><div class=t style='left:478.00px;top:705.00px;font-family:"Liberation Sans", sans-serif;font-size:10px;line-height:10px;font-weight:bold;color:#101010;letter-spacing:1.400px;width:70px;text-align:center;padding-left:1.4px;box-sizing:border-box;-webkit-text-stroke:0.25px #101010;'>185</div><div class=t style='left:22.80px;top:903.00px;font-family:"Liberation Sans", sans-serif;font-size:10px;line-height:10px;font-weight:bold;color:#1a4868;letter-spacing:0.806px;-webkit-text-stroke:0.25px #1a4868;'>Open View in Full Screen Window</div><div class=t style='left:33.60px;top:973.00px;font-family:"Liberation Sans", sans-serif;font-size:5.5px;line-height:5.5px;font-weight:normal;color:#a8a0b0;letter-spacing:1.398px;'>POWERED BY</div><div class=t style='left:35.90px;top:979.00px;font-family:"Liberation Sans", sans-serif;font-size:9px;line-height:9px;font-weight:normal;color:#4a2a70;letter-spacing:0.500px;'>VIGNETTE</div><div class=t style='left:22.20px;top:1009.00px;font-family:"Liberation Sans", sans-serif;font-size:11px;line-height:11px;font-weight:normal;color:#000;letter-spacing:0.000px;transform:scaleX(0.8938);transform-origin:0.00px 0;'>Done</div><div class=t style='left:1150.10px;top:1009.00px;font-family:"Liberation Sans", sans-serif;font-size:11px;line-height:11px;font-weight:normal;color:#000;letter-spacing:0.000px;transform:scaleX(0.9608);transform-origin:0.00px 0;'>Local intranet</div>
</div></body></html>
